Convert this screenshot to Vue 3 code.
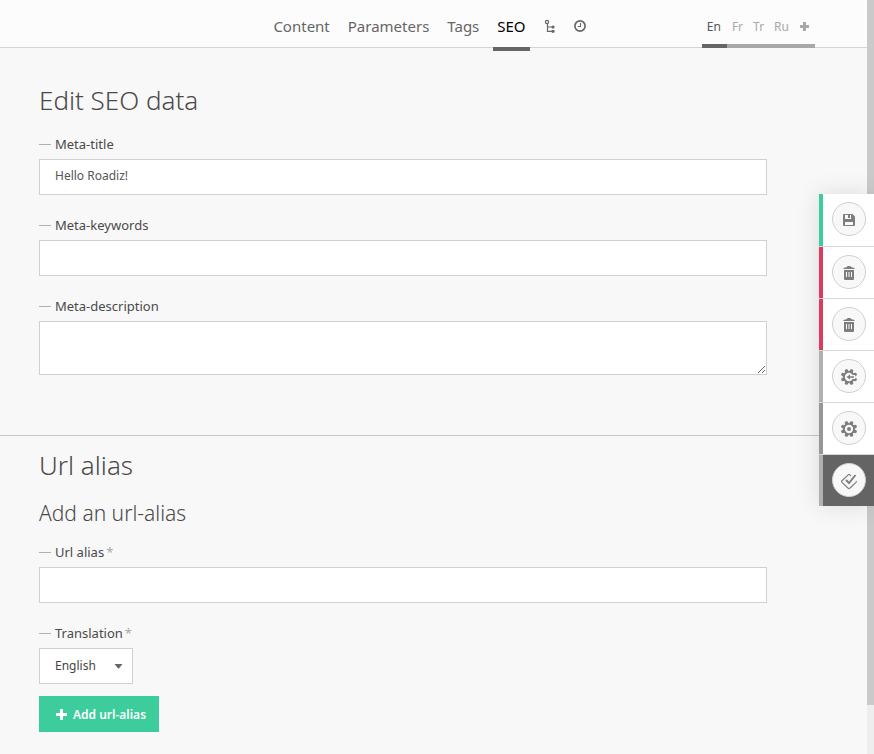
<template>
  <div class="page">
    <div class="content">
      <header class="header">
        <nav class="tabs" aria-label="Node">
          <a v-for="tab in tabs" :key="tab" href="#" class="tab" :class="{ active: tab === currentTab }" @click.prevent="currentTab = tab">{{ tab }}</a>
          <a href="#" class="tab" aria-label="Tree" @click.prevent>
            <svg width="12" height="14" viewBox="0 0 12 14" fill="none" stroke="currentColor">
              <circle cx="3" cy="3" r="1.6" stroke-width="1.2" />
              <path d="M3.5 5V12.3H8M3.5 8H8" stroke-width="1.2" />
              <circle cx="9" cy="8" r="1.6" fill="currentColor" stroke="none" />
              <circle cx="9" cy="12.3" r="1.6" fill="currentColor" stroke="none" />
            </svg>
          </a>
          <a href="#" class="tab" aria-label="History" @click.prevent>
            <svg width="12" height="12" viewBox="0 0 12 12" fill="none" stroke="currentColor">
              <circle cx="6" cy="6" r="5.1" stroke-width="1.7" />
              <path d="M6.5 3V6.5H3.8" stroke-width="1.1" />
            </svg>
          </a>
        </nav>
        <nav class="langs" aria-label="Translations">
          <a v-for="lang in langs" :key="lang" href="#" class="lang" :class="{ active: lang === currentLang }" @click.prevent="currentLang = lang">{{ lang }}</a>
          <a href="#" class="lang lang-add" aria-label="Add a translation" @click.prevent>
            <svg width="9" height="9" viewBox="0 0 9 9"><path d="M3 0H6V3H9V6H6V9H3V6H0V3H3Z" fill="currentColor" /></svg>
          </a>
        </nav>
      </header>

      <form class="section seo" @submit.prevent>
        <h1>Edit SEO data</h1>
        <div class="field">
          <label for="meta-title">Meta-title</label>
          <input id="meta-title" v-model="seo.title" type="text" />
        </div>
        <div class="field">
          <label for="meta-keywords">Meta-keywords</label>
          <input id="meta-keywords" v-model="seo.keywords" type="text" />
        </div>
        <div class="field">
          <label for="meta-description">Meta-description</label>
          <textarea id="meta-description" v-model="seo.description"></textarea>
        </div>
      </form>

      <form class="section alias" @submit.prevent>
        <h1>Url alias</h1>
        <h2>Add an url-alias</h2>
        <div class="field">
          <label for="url-alias">Url alias<span class="required">*</span></label>
          <input id="url-alias" v-model="alias.name" type="text" />
        </div>
        <div class="field field-select">
          <label for="translation">Translation<span class="required">*</span></label>
          <div class="select">
            <select id="translation" v-model="alias.translation">
              <option>English</option>
              <option>French</option>
              <option>Turkish</option>
              <option>Russian</option>
            </select>
            <svg class="caret" width="9" height="5" viewBox="0 0 9 5"><path d="M0.5 0H8.5L5.3 4Q4.5 5 3.7 4Z" fill="currentColor" /></svg>
          </div>
        </div>
        <button type="submit" class="add">
          <svg width="11" height="11" viewBox="0 0 11 11"><path d="M4 0H7V4H11V7H7V11H4V7H0V4H4Z" fill="currentColor" /></svg>
          Add url-alias
        </button>
      </form>
    </div>

    <div class="scrollbar"><div class="thumb"></div></div>

    <aside class="actions">
      <button v-for="(action, index) in actions" :key="index" type="button" class="action" :class="action.kind" :aria-label="action.label">
        <span class="circle">
          <svg v-if="action.icon === 'save'" width="12" height="12" viewBox="0 0 12 12" fill="currentColor">
            <path fill-rule="evenodd" d="M1 0H9.5L12 2.5V11Q12 12 11 12H1Q0 12 0 11V1Q0 0 1 0ZM2 1V5H8V1H7V4H5V1ZM2 8V11H10V8Z" />
          </svg>
          <svg v-else-if="action.icon === 'trash'" width="12" height="14" viewBox="0 0 12 14" fill="currentColor">
            <path d="M0.5 3V2L4 1L4.5 0H7.5L8 1L11.5 2V3Z" />
            <path fill-rule="evenodd" d="M1 4H11V13Q11 14 10 14H2Q1 14 1 13ZM3 6V11H4V6ZM5.5 6V11H6.5V6ZM8 6V11H9V6Z" />
          </svg>
          <svg v-else-if="action.icon === 'check'" width="18" height="18" viewBox="0 0 18 18" fill="none" stroke="currentColor">
            <path d="M11 4L9.8 2.8Q9 2 8.2 2.8L2 8.8Q1.2 9.6 2 10.4L8.2 16.2Q9 17 9.8 16.2L16 10.4Q16.6 9.8 16 9" stroke-width="1.2" />
            <path d="M6 8L9 11L15.5 3" stroke-width="1.9" />
          </svg>
          <svg v-else width="18" height="18" viewBox="-9 -9 18 18">
            <g fill="currentColor">
              <path v-for="n in 8" :key="n" d="M-2 -5L-1.3 -8.2H1.3L2 -5Z" :transform="`rotate(${n * 45 - 22.5})`" />
            </g>
            <circle r="5.1" fill="#f8f8f8" stroke="currentColor" stroke-width="1.9" />
            <circle v-if="action.icon === 'gear'" r="2" fill="currentColor" />
            <template v-else>
              <path d="M3.5 -2H6.2V2H3.5Z" fill="#f8f8f8" />
              <path d="M-2.5 0L1 -2.6V-0.8H5V0.8H1V2.6Z" fill="currentColor" />
            </template>
          </svg>
        </span>
      </button>
    </aside>
  </div>
</template>

<script setup>
import { reactive, ref } from 'vue'

const tabs = ['Content', 'Parameters', 'Tags', 'SEO']
const currentTab = ref('SEO')

const langs = ['En', 'Fr', 'Tr', 'Ru']
const currentLang = ref('En')

const seo = reactive({ title: 'Hello Roadiz!', keywords: '', description: '' })
const alias = reactive({ name: '', translation: 'English' })

const actions = [
  { icon: 'save', kind: 'green', label: 'Save' },
  { icon: 'trash', kind: 'red', label: 'Delete' },
  { icon: 'trash', kind: 'red', label: 'Delete translation' },
  { icon: 'gear-arrow', kind: 'light', label: 'Export' },
  { icon: 'gear', kind: 'grey', label: 'Settings' },
  { icon: 'check', kind: 'dark', label: 'Publish' },
]
</script>

<style>
body {
  margin: 0;
  background: #f8f8f8;
}
</style>

<style scoped>
.page {
  display: flex;
  min-height: 100vh;
  font-family: "Noto Sans", "Open Sans", sans-serif;
  font-size: 12px;
  color: #4a4a4a;
  background: #f8f8f8;
}

.page *,
.page {
  box-sizing: border-box;
}

.content {
  flex: 1;
  min-width: 0;
}

.header {
  display: grid;
  grid-template-columns: 1fr auto 1fr;
  height: 48px;
  padding-right: 52px;
  padding-left: 44px;
  border-bottom: 1px solid #d4d4d4;
  background: #fcfcfc;
}

a {
  color: inherit;
  text-decoration: none;
}

.tabs {
  display: flex;
  grid-column: 2;
  gap: 10px;
  height: 51px;
}

.tab {
  display: flex;
  align-items: center;
  padding: 5px 4px 0;
  border-bottom: 4px solid transparent;
  font-size: 15px;
  color: #666;
}

.tab.active {
  border-color: #666;
  color: #000;
}

.langs {
  display: flex;
  justify-self: end;
  height: 48px;
}

.lang {
  display: flex;
  align-items: center;
  padding: 8px 5px 0;
  border-bottom: 4px solid #a8a8a8;
  font-size: 12px;
  color: #a8a8a8;
}

.lang.active {
  padding-right: 6px;
  border-color: #666;
  color: #555;
}

.lang-add {
  padding-right: 6px;
  padding-left: 6px;
}

.section {
  padding: 36px 100px 40px 39px;
}

.alias {
  padding-top: 13px;
  padding-bottom: 20px;
  border-top: 1px solid #c8c8c8;
}

h1,
h2 {
  margin: 0;
  font-weight: 300;
}

h1 {
  margin-bottom: 18px;
  font-size: 26px;
  line-height: 32px;
}

h2 {
  margin-bottom: 15px;
  font-size: 21px;
  line-height: 28px;
}

.field {
  margin-bottom: 20px;
}

label {
  display: flex;
  align-items: center;
  margin-bottom: 5px;
  font-size: 13px;
  line-height: 20px;
}

label::before {
  width: 12px;
  height: 1px;
  margin-right: 4px;
  background: #b0b0b0;
  content: "";
}

.required {
  margin-left: 2px;
  color: #aaa;
}

input,
textarea,
select {
  display: block;
  width: 100%;
  height: 36px;
  margin: 0;
  padding: 0 15px 3px;
  border: 1px solid #d0d0d0;
  border-radius: 0;
  background: #fff;
  font: inherit;
  color: #555;
}

textarea {
  height: 54px;
  padding-top: 8px;
  resize: vertical;
}

.field-select {
  margin-bottom: 12px;
}

.select {
  position: relative;
  width: 94px;
}

select {
  padding-bottom: 1px;
  color: #444;
  appearance: none;
}

.caret {
  position: absolute;
  top: 16px;
  right: 10px;
  color: #666;
  pointer-events: none;
}

.add {
  display: flex;
  align-items: center;
  gap: 6px;
  height: 36px;
  padding: 1px 13px 0 17px;
  border: 0;
  background: #3dcc9c;
  font: inherit;
  font-weight: 600;
  color: #fff;
}

.scrollbar {
  width: 7px;
  background: #eee;
}

.thumb {
  height: 705px;
  background: #cacaca;
}

.actions {
  position: fixed;
  top: 194px;
  right: 0;
  width: 55px;
  box-shadow: 0 0 24px rgba(0, 0, 0, 0.12);
}

.action {
  display: flex;
  align-items: flex-start;
  justify-content: center;
  width: 100%;
  height: 52px;
  padding: 8px 0 0 5px;
  border: 0;
  background: #fff;
  box-shadow: inset 4px 0 #b0b0b0;
}

.action + .action {
  border-top: 1px solid #d8d8d8;
}

.action.green {
  box-shadow: inset 4px 0 #3dcc9c;
}

.action.red {
  box-shadow: inset 4px 0 #db3b61;
}

.action.grey {
  box-shadow: inset 4px 0 #969696;
}

.action.dark {
  background: #646464;
}

.circle {
  display: flex;
  align-items: center;
  justify-content: center;
  width: 34px;
  height: 34px;
  padding-top: 2px;
  border: 1px solid #d0d0d0;
  border-radius: 50%;
  background: #f8f8f8;
  color: #7e7e7e;
}
</style>
